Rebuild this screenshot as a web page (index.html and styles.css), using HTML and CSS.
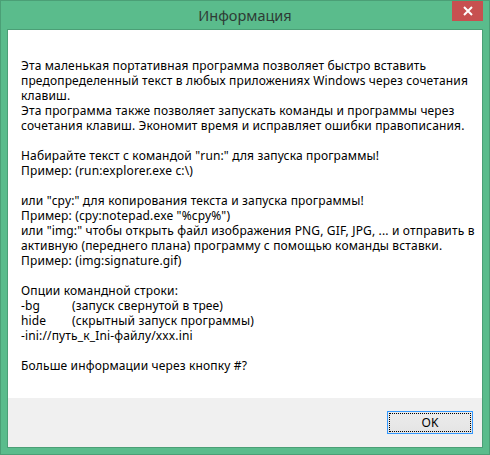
FILE: index.html
```html
<!DOCTYPE html>
<html lang="ru">
<head>
<meta charset="utf-8">
<title>Информация</title>
<link rel="stylesheet" href="styles.css">
</head>
<body>
<div class="window">
  <div class="titlebar">
    <div class="title">Информация</div>
    <div class="close">
      <svg width="10" height="10" viewBox="0 0 10 10"><path d="M1 1 L9 9 M9 1 L1 9" stroke="#fff" stroke-width="2" fill="none"/></svg>
    </div>
  </div>
  <div class="client">
    <div class="content">
      <p class="msg">Эта маленькая портативная программа позволяет быстро вставить<br>предопределенный текст в любых приложениях Windows через сочетания<br>клавиш.<br>Эта программа также позволяет запускать команды и программы через<br>сочетания клавиш. Экономит время и исправляет ошибки правописания.<br><br>Набирайте текст с командой "run:" для запуска программы!<br>Пример: (run:explorer.exe c:\)<br><br>или "cpy:" для копирования текста и запуска программы!<br>Пример: (cpy:notepad.exe "%cpy%")<br>или "img:" чтобы открыть файл изображения PNG, GIF, JPG, ... и отправить в<br>активную (переднего плана) программу с помощью команды вставки.<br>Пример: (img:signature.gif)<br><br>Опции командной строки:<br><span class="opt">-bg</span>(запуск свернутой в трее)<br><span class="opt">hide</span>(скрытный запуск программы)<br>-ini://путь_к_Ini-файлу/xxx.ini<br><br>Больше информации через кнопку #?</p>
    </div>
    <div class="footer">
      <button class="ok"><span class="focus">OK</span></button>
    </div>
  </div>
</div>
</body>
</html>
```
FILE: styles.css
```css
html, body {
  margin: 0;
  padding: 0;
}
body {
  width: 490px;
  height: 455px;
  overflow: hidden;
}
.window {
  box-sizing: border-box;
  width: 490px;
  height: 455px;
  background: #5abc8c;
  border: 1px solid #4b9f76;
  display: flex;
  flex-direction: column;
  position: relative;
}
.titlebar {
  height: 28px;
  flex: none;
}
.title {
  text-align: center;
  font-family: "Noto Sans", sans-serif;
  font-size: 14.5px;
  line-height: 28px;
  color: #2e3b35;
}
.close {
  position: absolute;
  top: 0;
  right: 6px;
  width: 31px;
  height: 20px;
  background: #c75050;
  display: flex;
  align-items: center;
  justify-content: center;
}
.close svg {
  display: block;
}
.client {
  flex: 1;
  margin: 0 6px 6px 6px;
  border: 1px solid #4b9f76;
  display: flex;
  flex-direction: column;
  background: #fff;
}
.content {
  flex: 1;
  background: #fff;
  padding: 28px 0 0 13px;
}
.msg {
  margin: 0;
  font-family: "Noto Sans", sans-serif;
  font-size: 12px;
  letter-spacing: 0.15px;
  line-height: 15px;
  color: #000;
  white-space: nowrap;
}
.opt {
  display: inline-block;
  width: 51px;
}
.footer {
  height: 49px;
  flex: none;
  background: #f0f0f0;
  display: flex;
  justify-content: flex-end;
  align-items: flex-start;
}
.ok {
  margin: 13px 9px 0 0;
  box-sizing: border-box;
  width: 86px;
  height: 23px;
  padding: 1px;
  border: 1px solid #3399ff;
  background: linear-gradient(#ececec, #e4e4e4);
  font-family: "Noto Sans", sans-serif;
  font-size: 12px;
  color: #000;
  display: flex;
}
.focus {
  flex: 1;
  border: 1px dotted #000;
  display: flex;
  align-items: center;
  justify-content: center;
}
```
